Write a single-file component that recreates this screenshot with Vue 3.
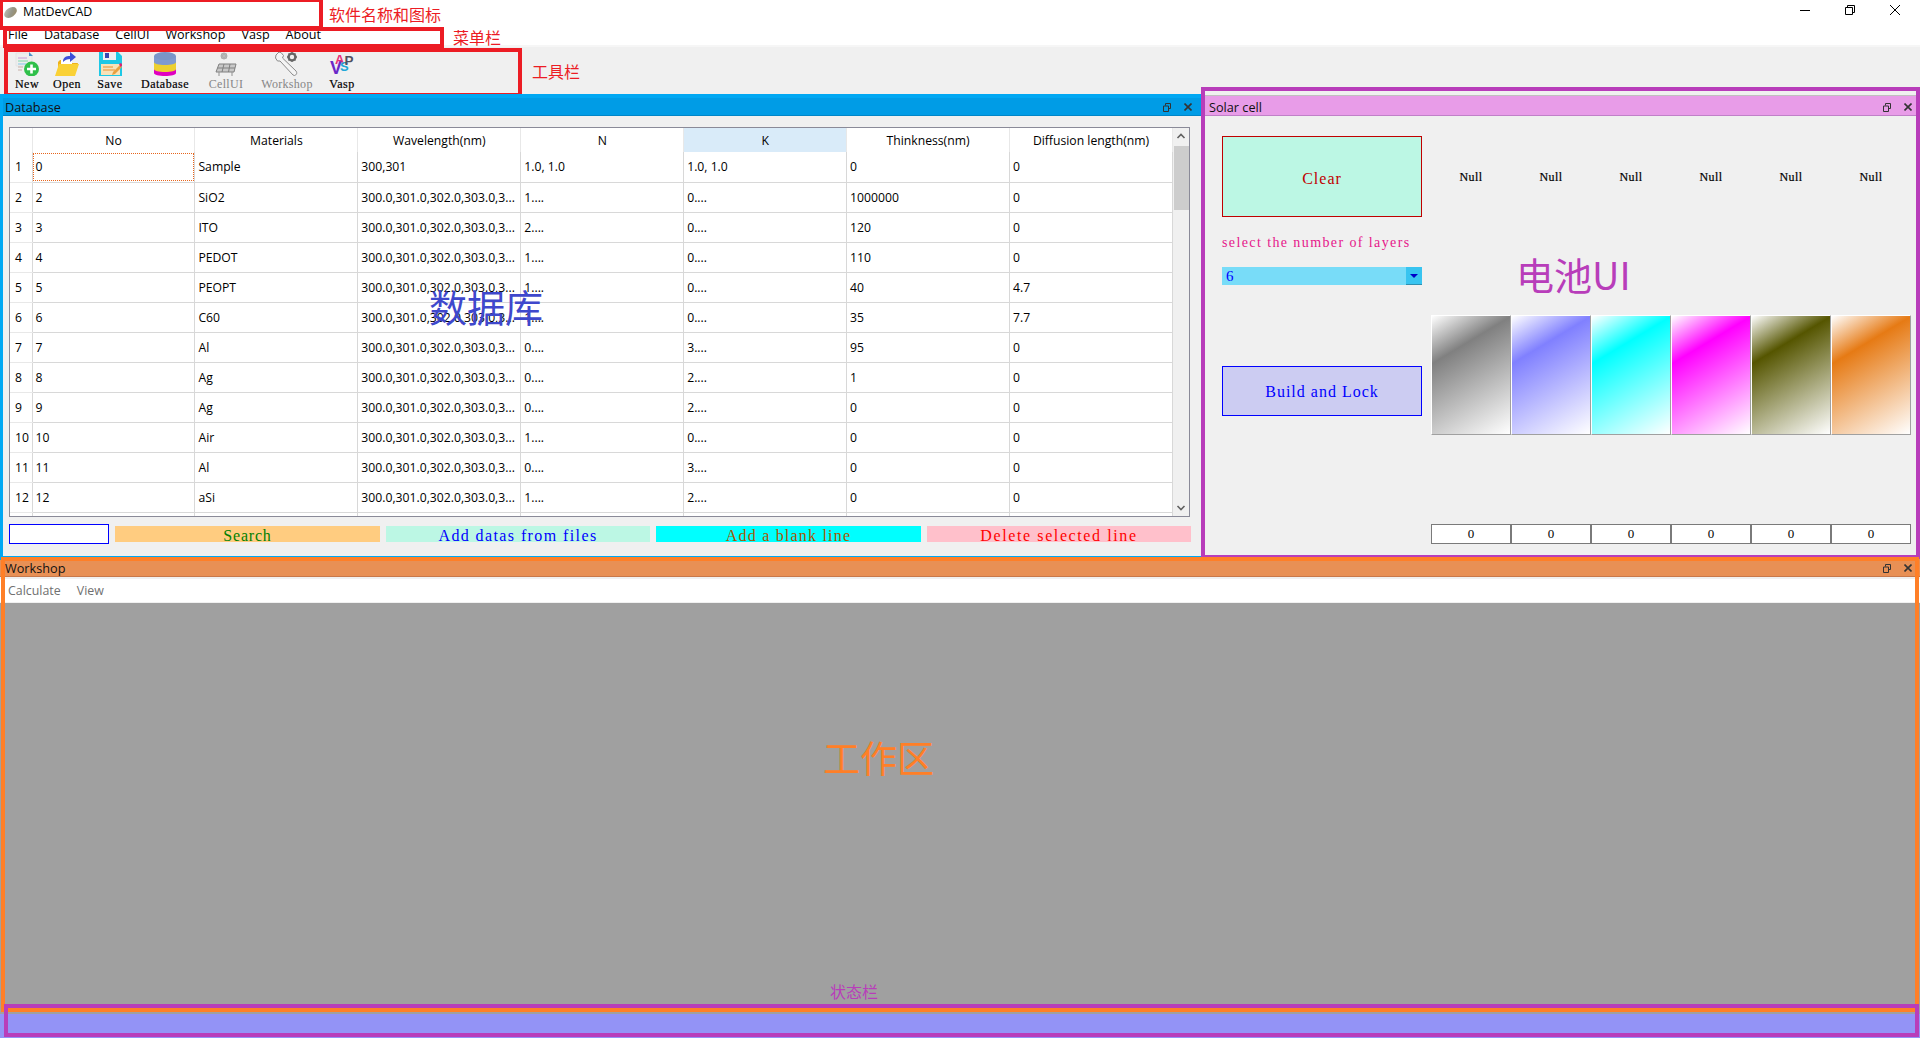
<script setup>
const menus = ["File", "Database", "CellUI", "Workshop", "Vasp", "About"];

const headers = ["No", "Materials", "Wavelength(nm)", "N", "K", "Thinkness(nm)", "Diffusion length(nm)"];

const longWave = "300.0,301.0,302.0,303.0,3...";
const rows = [
  ["0", "Sample", "300,301", "1.0, 1.0", "1.0, 1.0", "0", "0"],
  ["2", "SiO2", longWave, "1....", "0....", "1000000", "0"],
  ["3", "ITO", longWave, "2....", "0....", "120", "0"],
  ["4", "PEDOT", longWave, "1....", "0....", "110", "0"],
  ["5", "PEOPT", longWave, "1....", "0....", "40", "4.7"],
  ["6", "C60", longWave, "1....", "0....", "35", "7.7"],
  ["7", "Al", longWave, "0....", "3....", "95", "0"],
  ["8", "Ag", longWave, "0....", "2....", "1", "0"],
  ["9", "Ag", longWave, "0....", "2....", "0", "0"],
  ["10", "Air", longWave, "1....", "0....", "0", "0"],
  ["11", "Al", longWave, "0....", "3....", "0", "0"],
  ["12", "aSi", longWave, "1....", "2....", "0", "0"],
];

const layerColors = ["#808080", "#8080ff", "#00ffff", "#ff00ff", "#555500", "#e67a14"];

function swatchStyle(color) {
  return { background: `linear-gradient(149deg, #fff 0%, ${color} 29%, #fff 100%)` };
}
</script>

<template>
  <div class="app">
    <!-- title bar -->
    <div class="titlebar">
      <svg class="app-icon" width="13" height="13" viewBox="0 0 13 13">
        <defs>
          <linearGradient id="orb" x1="0" y1="0" x2="1" y2="1">
            <stop offset="0" stop-color="#c4c4bc" />
            <stop offset="0.55" stop-color="#969688" />
            <stop offset="1" stop-color="#9c8a60" />
          </linearGradient>
        </defs>
        <ellipse cx="6.5" cy="6.5" rx="7" ry="4.6" transform="rotate(-35 6.5 6.5)" fill="url(#orb)" />
      </svg>
      <span class="app-name">MatDevCAD</span>
      <div class="win-controls">
        <svg width="10" height="10" viewBox="0 0 10 10"><path d="M0 5.5h10" stroke="#000" fill="none" /></svg>
        <svg width="10" height="10" viewBox="0 0 10 10">
          <path d="M.5 2.5h7v7h-7zM2.5 2.5v-2h7v7h-2" stroke="#000" fill="none" />
        </svg>
        <svg width="10" height="10" viewBox="0 0 10 10"><path d="M0 0l10 10M10 0L0 10" stroke="#000" fill="none" /></svg>
      </div>
    </div>

    <!-- menu bar -->
    <div class="menubar">
      <span v-for="m in menus" :key="m">{{ m }}</span>
    </div>

    <!-- tool bar -->
    <div class="toolbar">
      <div class="tool tool-short">
        <svg width="24" height="24" viewBox="0 0 24 24">
          <path d="M1 1h13l3 3v10H1z" fill="#eeeeee" stroke="#d8d8d8" stroke-width=".5" />
          <path d="M14 0l4 4h-4z" fill="#4a90c8" />
          <path d="M3 6h9" stroke="#c89ad8" />
          <path d="M3 9h10" stroke="#80d8a8" />
          <path d="M3 12h8" stroke="#80c8e8" />
          <path d="M3 15h5M3 18h4" stroke="#c8b0a8" />
          <circle cx="16.5" cy="17" r="7.5" fill="#2fc04a" />
          <path d="M16.5 12.5v9M12 17h9" stroke="#fff" stroke-width="2.6" />
        </svg>
        <span>New</span>
      </div>
      <div class="tool">
        <svg width="24" height="24" viewBox="0 0 24 24">
          <path d="M3 10V24H19L23 11H15L13 8H5z" fill="#eeb21c" />
          <path d="M6 8h11v6H6z" fill="#fff" />
          <path d="M0 24L4 12H24L20 24z" fill="#fad136" />
          <path d="M8 10C8 5 11 4 15 4V0l6 5-6 5V7C12 7 10 8 8 10z" fill="#3d50d8" />
        </svg>
        <span>Open</span>
      </div>
      <div class="tool">
        <svg width="24" height="24" viewBox="0 0 24 24">
          <path d="M1 0H20L24 4V24H1z" fill="#1dc8e6" />
          <path d="M5 0H18V8H5z" fill="#eef0f4" />
          <path d="M7 1H11V6H7z" fill="#3848b0" />
          <path d="M3 12H22V23H3z" fill="#f8e2b8" />
          <path d="M5 15h10M5 18h12" stroke="#e89030" stroke-width="1.2" />
          <path d="M15 20l7-7 2 2-7 7-3 1z" fill="#e8a040" />
          <path d="M21 12l2-1 1.5 2-2 2z" fill="#e02070" />
        </svg>
        <span>Save</span>
      </div>
      <div class="tool tool-wide">
        <svg width="24" height="24" viewBox="0 0 24 24">
          <path d="M1 17v4c0 2 5 3 11 3s11-1 11-3v-4z" fill="#e000c0" />
          <path d="M1 9v8c0 2 5 3 11 3s11-1 11-3V9z" fill="#ecd030" />
          <path d="M1 4v6c0 2 5 3 11 3s11-1 11-3V4z" fill="#7e9ad0" />
          <ellipse cx="12" cy="4" rx="11" ry="4" fill="#7a96c8" />
        </svg>
        <span>Database</span>
      </div>
      <div class="tool tool-mid off">
        <svg width="24" height="24" viewBox="0 0 24 24">
          <circle cx="10" cy="4" r="3.2" fill="#a8a8a8" />
          <path d="M10 0v8M6 4h8M7 1l6 6M13 1l-6 6" stroke="#c0c0c0" stroke-width=".6" />
          <path d="M5 12H22L20 20H2z" fill="#c8c8c8" stroke="#808080" />
          <path d="M10 12L8 20M16 12L14.5 20M3.5 16H21" stroke="#808080" />
          <path d="M5 20v4M18 20v4" stroke="#909090" />
        </svg>
        <span>CellUI</span>
      </div>
      <div class="tool tool-wide off">
        <svg width="24" height="24" viewBox="0 0 24 24">
          <path
            d="M1 3l3-3 2 .5 2.5 3-1 2.5L21 19c1.500 2 .5 4-1.500 4.500L18 23 5 9 2.500 9 .5 6z"
            fill="#f4f4f4"
            stroke="#8a8a8a"
          />
          <circle cx="17" cy="5" r="3.400" fill="none" stroke="#666" stroke-width="2.400" />
          <path d="M17 0v2M17 8v2M12 5h2M20 5h2M13.500 1.500l1.500 1.500M19 7l1.500 1.500M20.500 1.500L19 3M15 7l-1.500 1.500" stroke="#666" stroke-width="1.400" />
        </svg>
        <span>Workshop</span>
      </div>
      <div class="tool">
        <svg class="vasp-icon" width="24" height="24" viewBox="0 0 24 24">
          <text x="0" y="22" class="vasp-v">V</text>
          <text x="5" y="12" class="vasp-a">A</text>
          <text x="10" y="19" class="vasp-s">S</text>
          <text x="14.500" y="13" class="vasp-p">P</text>
        </svg>
        <span>Vasp</span>
      </div>
    </div>

    <!-- database and solar cell docks -->
    <div class="docks">
      <section class="dock database">
        <div class="dock-title db-title">
          <span>Database</span>
          <svg class="float-icon" width="8" height="9" viewBox="0 0 8 9"><path d="M2.500 2.500V.5h5v5H5.500M.5 3h5v5.500h-5z" fill="none" stroke="#333" /></svg>
          <svg class="close-icon" width="8" height="8" viewBox="0 0 8 8"><path d="M.5 .5l7 7M7.500 .5l-7 7" stroke="#333" stroke-width="1.600" /></svg>
        </div>
        <div class="db-body">
          <div class="table-frame">
            <div class="table-clip">
              <table class="grid">
                <colgroup>
                  <col class="col-index" />
                  <col v-for="h in headers" :key="h" />
                </colgroup>
                <thead>
                  <tr>
                    <th class="corner"></th>
                    <th v-for="h in headers" :key="h" :class="{ current: h === 'K' }">{{ h }}</th>
                  </tr>
                </thead>
                <tbody>
                  <tr v-for="(row, i) in rows" :key="i">
                    <td class="index">{{ i + 1 }}</td>
                    <td v-for="(cell, j) in row" :key="j" :class="{ focus: i === 0 && j === 0 }">{{ cell }}</td>
                  </tr>
                  <tr>
                    <td class="index"></td>
                    <td v-for="h in headers" :key="h"></td>
                  </tr>
                </tbody>
              </table>
            </div>
            <div class="scrollbar">
              <svg class="arrow" width="16" height="18" viewBox="0 0 16 18"><path d="M4.500 10L8 6.500 11.500 10" fill="none" stroke="#606060" stroke-width="1.600" /></svg>
              <div class="thumb"></div>
              <svg class="arrow arrow-end" width="16" height="18" viewBox="0 0 16 18"><path d="M4.500 8L8 11.500 11.500 8" fill="none" stroke="#606060" stroke-width="1.600" /></svg>
            </div>
          </div>
          <div class="db-actions">
            <div class="search-box"></div>
            <button class="act act-search">Search</button>
            <button class="act act-files">Add datas from files</button>
            <button class="act act-blank">Add a blank line</button>
            <button class="act act-delete">Delete selected line</button>
          </div>
        </div>
      </section>

      <section class="dock solar">
        <div class="dock-title solar-title">
          <span>Solar cell</span>
          <svg class="float-icon" width="8" height="9" viewBox="0 0 8 9"><path d="M2.500 2.500V.5h5v5H5.500M.5 3h5v5.500h-5z" fill="none" stroke="#333" /></svg>
          <svg class="close-icon" width="8" height="8" viewBox="0 0 8 8"><path d="M.5 .5l7 7M7.500 .5l-7 7" stroke="#333" stroke-width="1.600" /></svg>
        </div>
        <div class="solar-body">
          <div class="solar-side">
            <button class="clear-btn">Clear</button>
            <div class="layers-label">select the number of layers</div>
            <div class="combo">
              <span>6</span>
              <span class="combo-drop"></span>
            </div>
            <button class="build-btn">Build and Lock</button>
          </div>
          <div class="solar-stack">
            <div class="layer-row null-row">
              <span v-for="(c, i) in layerColors" :key="i">Null</span>
            </div>
            <div class="layer-row swatch-row">
              <div v-for="c in layerColors" :key="c" class="swatch" :style="swatchStyle(c)"></div>
            </div>
            <div class="layer-row zero-row">
              <div v-for="(c, i) in layerColors" :key="i" class="zero">0</div>
            </div>
          </div>
        </div>
      </section>
    </div>

    <!-- workshop dock -->
    <section class="workshop">
      <div class="dock-title work-title">
        <span>Workshop</span>
        <svg class="float-icon" width="8" height="9" viewBox="0 0 8 9"><path d="M2.500 2.500V.5h5v5H5.500M.5 3h5v5.500h-5z" fill="none" stroke="#333" /></svg>
        <svg class="close-icon" width="8" height="8" viewBox="0 0 8 8"><path d="M.5 .5l7 7M7.500 .5l-7 7" stroke="#333" stroke-width="1.600" /></svg>
      </div>
      <div class="work-menu">
        <span>Calculate</span>
        <span>View</span>
      </div>
      <div class="work-area"></div>
    </section>

    <div class="statusbar"></div>

    <!-- annotations painted over the screenshot -->
    <div class="mark mark-name"></div>
    <div class="mark mark-menu"></div>
    <div class="mark mark-tool"></div>
    <div class="mark mark-db"></div>
    <div class="mark mark-solar"></div>
    <div class="mark mark-work"></div>
    <div class="mark mark-status"></div>

    <span class="note note-name">软件名称和图标</span>
    <span class="note note-menu">菜单栏</span>
    <span class="note note-tool">工具栏</span>
    <span class="note note-db">数据库</span>
    <span class="note note-solar">电池UI</span>
    <span class="note note-work">工作区</span>
    <span class="note note-status">状态栏</span>
  </div>
</template>

<style>
html,
body {
  margin: 0;
  background: #fff;
}
</style>

<style scoped>
.app {
  position: relative;
  width: 1920px;
  height: 1038px;
  overflow: hidden;
  display: flex;
  flex-direction: column;
  background: #fff;
  font-family: "Open Sans", "Noto Sans", sans-serif;
  font-size: 12px;
  color: #000;
}

button {
  margin: 0;
  padding: 0;
  font-family: "Liberation Serif", serif;
  font-size: 16px;
  cursor: pointer;
}

/************ title, menu, tool bars ************/
.titlebar {
  flex: none;
  height: 27px;
  display: flex;
  align-items: center;
  padding-left: 4px;
}

.app-icon {
  margin-top: -3px;
}

.app-name {
  margin-left: 6px;
  margin-top: -5px;
  font-size: 12.4px;
}

.win-controls {
  margin-left: auto;
  margin-top: -7px;
  display: flex;
  gap: 35px;
  padding-right: 20px;
}

.menubar {
  flex: none;
  height: 18px;
  display: flex;
  gap: 16px;
  padding-left: 8px;
  font-size: 12.6px;
  line-height: 15px;
}

.toolbar {
  flex: none;
  height: 47px;
  display: flex;
  gap: 19px;
  padding-left: 18px;
  border-top: 2px solid #f6f6f6;
  background: #f0f0f0;
}

.tool {
  width: 24px;
  display: flex;
  flex-direction: column;
  align-items: center;
  padding-top: 5px;
  font-family: "Liberation Serif", serif;
  font-size: 12px;
  line-height: 12px;
  letter-spacing: 0.5px;
  -webkit-text-stroke: 0.2px #000;
}

.tool span {
  margin-top: 2px;
  white-space: nowrap;
}

.tool svg {
  flex: none;
}

.tool-short {
  width: 18px;
}

.tool-mid {
  width: 36px;
}

.tool-wide {
  width: 48px;
}

.tool.off {
  color: #868686;
  letter-spacing: 0.3px;
  -webkit-text-stroke: 0;
}

.vasp-icon {
  overflow: visible;
}

.vasp-icon text {
  font-family: "Liberation Sans", sans-serif;
  font-weight: bold;
  letter-spacing: 0;
  -webkit-text-stroke: 0;
}

.vasp-v {
  font-size: 18px;
  fill: #6a28c8;
}

.vasp-a {
  font-size: 13px;
  fill: #e83078;
}

.vasp-s {
  font-size: 13px;
  fill: #20a8d8;
}

.vasp-p {
  font-size: 13.500px;
  fill: #505060;
}

/************ docks ************/
.docks {
  flex: none;
  height: 463px;
  display: flex;
  background: #f0f0f0;
}

.dock {
  display: flex;
  flex-direction: column;
}

.database {
  width: 1201px;
}

.solar {
  flex: 1;
  padding-top: 1px;
}

.dock-title {
  flex: none;
  display: flex;
  align-items: center;
  padding-left: 5px;
  box-sizing: border-box;
  font-size: 12.7px;
}

.dock-title span {
  flex: 1;
  color: #111;
}

.db-title {
  height: 22px;
  padding-top: 5px;
  background: #009ce6;
  border-bottom: 1px solid #0086c8;
}

.solar-title {
  height: 21px;
  margin-left: 4px;
  padding-left: 4px;
  padding-top: 3px;
  background: #e89ce8;
  border-top: 1px solid #c0c0c0;
  border-bottom: 1px solid #c080c8;
}

.work-title {
  height: 20px;
  padding-top: 3px;
  background: #e89055;
  border-bottom: 1px solid #c8784a;
}

.float-icon {
  margin-right: 13px;
}

.close-icon {
  margin-right: 9px;
}

.solar-title .close-icon,
.work-title .close-icon {
  margin-right: 8px;
}

/************ database table ************/
.db-body {
  padding: 11px 10px 0 9px;
}

.table-frame {
  box-sizing: border-box;
  width: 1181px;
  height: 390px;
  display: flex;
  border: 1px solid #8a8a98;
  background: #fff;
}

.table-clip {
  width: 1163px;
  overflow: hidden;
}

.grid {
  width: 1163px;
  border-collapse: collapse;
  table-layout: fixed;
  font-size: 12.2px;
  line-height: 16px;
}

.col-index {
  width: 22px;
}

.grid th {
  box-sizing: border-box;
  height: 24px;
  padding: 1px 0 0;
  font-weight: normal;
  text-align: center;
  background: #fff;
  border-right: 1px solid #e8e8e8;
}

.grid th.current {
  background: #d9ebf9;
}

.grid td {
  box-sizing: border-box;
  height: 30px;
  padding: 1px 3px 0;
  white-space: nowrap;
  overflow: hidden;
  border-right: 1px solid #d8d8d8;
  border-bottom: 1px solid #d8d8d8;
}

.grid td.index {
  padding: 1px 0 0 5px;
  border-bottom-color: #e8e8e8;
}

.grid td.focus {
  outline: 1px dotted #e8651c;
  outline-offset: -2px;
}

.scrollbar {
  width: 16px;
  display: flex;
  flex-direction: column;
  background: #f0f0f0;
}

.arrow {
  flex: none;
}

.arrow-end {
  margin-top: auto;
}

.thumb {
  width: 15px;
  height: 64px;
  margin-left: 1px;
  background: #cdcdcd;
}

/************ database actions ************/
.db-actions {
  height: 20px;
  margin-top: 7px;
  display: flex;
  align-items: center;
  gap: 6px;
  width: 1182px;
}

.search-box {
  box-sizing: border-box;
  width: 100px;
  height: 20px;
  background: #fff;
  border: 1px solid #0000ff;
}

.act {
  height: 16px;
  border: none;
  line-height: 16px;
  padding-top: 2px;
  white-space: nowrap;
}

.act-search {
  width: 265px;
  background: #ffcc80;
  color: #008000;
  letter-spacing: 0.8px;
}

.act-files {
  width: 264px;
  background: #bcf7e4;
  color: #0000ff;
  letter-spacing: 1.4px;
}

.act-blank {
  width: 265px;
  background: #00ffff;
  color: #aa5500;
  letter-spacing: 1.2px;
}

.act-delete {
  width: 264px;
  background: #ffc0cb;
  color: #ff0000;
  letter-spacing: 1.6px;
}

/************ solar cell ************/
.solar-body {
  display: flex;
  gap: 9px;
  padding-left: 21px;
}

.solar-side {
  width: 200px;
  padding-top: 20px;
  display: flex;
  flex-direction: column;
}

.clear-btn {
  box-sizing: border-box;
  height: 81px;
  padding-top: 4px;
  background: #bcf7e4;
  border: 1px solid #c00000;
  color: #c00000;
  letter-spacing: 1px;
}

.layers-label {
  margin-top: 18px;
  font-family: "Liberation Serif", serif;
  font-size: 14px;
  line-height: 16px;
  letter-spacing: 1.4px;
  color: #e6178a;
  white-space: nowrap;
}

.combo {
  height: 18px;
  margin-top: 16px;
  display: flex;
  justify-content: space-between;
  align-items: center;
  padding-left: 4px;
  background: #78dcf8;
  font-family: "Liberation Serif", serif;
  font-size: 15px;
  color: #0000ff;
}

.combo-drop {
  position: relative;
  width: 16px;
  height: 18px;
  background: #38c4f0;
  border-bottom: 1px solid #3090b0;
  box-sizing: border-box;
}

.combo-drop::after {
  content: "";
  position: absolute;
  left: 4px;
  top: 7px;
  border-left: 4px solid transparent;
  border-right: 4px solid transparent;
  border-top: 4px solid #0000c8;
}

.build-btn {
  box-sizing: border-box;
  height: 50px;
  padding-top: 1px;
  margin-top: 81px;
  background: #ccccf2;
  border: 1px solid #0000ff;
  color: #0000ff;
  letter-spacing: 1px;
}

.solar-stack {
  width: 480px;
  padding-top: 20px;
}

.layer-row {
  display: grid;
  grid-template-columns: repeat(6, 80px);
}

.null-row {
  height: 81px;
  padding-top: 1px;
  box-sizing: border-box;
  align-items: center;
  text-align: center;
  font-family: "Liberation Serif", serif;
  font-size: 12px;
  letter-spacing: 0.4px;
  -webkit-text-stroke: 0.2px #000;
}

.swatch-row {
  margin-top: 98px;
  height: 120px;
}

.swatch {
  box-sizing: border-box;
  border-top: 1px solid #fff;
  border-left: 1px solid #fff;
  border-right: 1px solid #a0a0a0;
  border-bottom: 1px solid #a0a0a0;
}

.zero-row {
  margin-top: 89px;
  height: 20px;
}

.zero {
  box-sizing: border-box;
  border: 1px solid #7a7a7a;
  background: #fff;
  text-align: center;
  font-family: "Liberation Serif", serif;
  font-size: 13px;
  line-height: 18px;
}

/************ workshop ************/
.workshop {
  flex: none;
  height: 457px;
  display: flex;
  flex-direction: column;
  background: #f0f0f0;
}

.work-menu {
  flex: none;
  height: 23px;
  margin-top: 2px;
  display: flex;
  gap: 16px;
  align-items: center;
  padding-left: 8px;
  background: #fff;
  color: #707070;
  font-size: 12.4px;
}

.work-area {
  flex: 1;
  margin-top: 1px;
  background: #a0a0a0;
}

.statusbar {
  flex: 1;
  background: #9393f6;
}

/************ annotations ************/
.mark {
  position: absolute;
  box-sizing: border-box;
  border: 4px solid #ec1c24;
  pointer-events: none;
}

.mark-name {
  left: -1px;
  top: -2px;
  width: 324px;
  height: 32px;
}

.mark-menu {
  left: 3px;
  top: 27px;
  width: 441px;
  height: 21px;
}

.mark-tool {
  left: 4px;
  top: 48px;
  width: 518px;
  height: 49px;
}

.mark-db {
  left: -1px;
  top: 94px;
  width: 1206px;
  height: 466px;
  border-color: #00a8f3;
}

.mark-solar {
  left: 1201px;
  top: 87px;
  width: 719px;
  height: 472px;
  border-color: #b83dba;
}

.mark-work {
  left: 1px;
  top: 557px;
  width: 1918px;
  height: 455px;
  border-color: #ff7f27;
}

.mark-status {
  left: 4px;
  top: 1004px;
  width: 1915px;
  height: 33px;
  border-color: #b83dba;
}

.note {
  position: absolute;
  font-family: "Noto Sans CJK SC", "Noto Sans", sans-serif;
  white-space: nowrap;
  line-height: 1;
}

.note-name,
.note-menu,
.note-tool {
  font-size: 16px;
  color: #ec1c24;
}

.note-name {
  left: 329px;
  top: 6px;
}

.note-menu {
  left: 453px;
  top: 29px;
}

.note-tool {
  left: 532px;
  top: 63px;
}

.note-db {
  left: 429px;
  top: 287px;
  font-size: 38px;
  color: #3f48cc;
}

.note-solar {
  left: 1516px;
  top: 255px;
  font-size: 38px;
  color: #b83dba;
}

.note-work {
  left: 823px;
  top: 739px;
  font-size: 37px;
  color: #ff7f27;
}

.note-status {
  left: 830px;
  top: 983px;
  font-size: 16px;
  color: #b83dba;
}
</style>
